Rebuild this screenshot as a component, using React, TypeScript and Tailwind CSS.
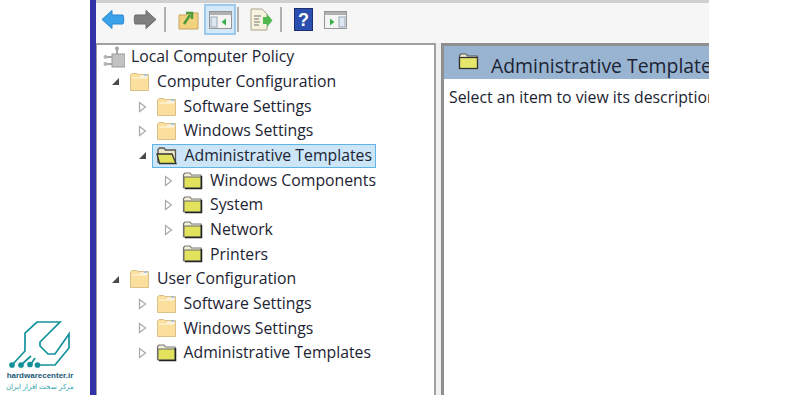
import type { ReactNode } from 'react';

type FolderKind = 'plain' | 'policy' | 'open';
type Arrow = 'open' | 'closed' | 'none';

type TreeRow = {
  label: string;
  depth: number;
  arrow: Arrow;
  folder: FolderKind;
  selected?: boolean;
};

const rows: TreeRow[] = [
  { label: 'Computer Configuration', depth: 0, arrow: 'open', folder: 'plain' },
  { label: 'Software Settings', depth: 1, arrow: 'closed', folder: 'plain' },
  { label: 'Windows Settings', depth: 1, arrow: 'closed', folder: 'plain' },
  { label: 'Administrative Templates', depth: 1, arrow: 'open', folder: 'open', selected: true },
  { label: 'Windows Components', depth: 2, arrow: 'closed', folder: 'policy' },
  { label: 'System', depth: 2, arrow: 'closed', folder: 'policy' },
  { label: 'Network', depth: 2, arrow: 'closed', folder: 'policy' },
  { label: 'Printers', depth: 2, arrow: 'none', folder: 'policy' },
  { label: 'User Configuration', depth: 0, arrow: 'open', folder: 'plain' },
  { label: 'Software Settings', depth: 1, arrow: 'closed', folder: 'plain' },
  { label: 'Windows Settings', depth: 1, arrow: 'closed', folder: 'plain' },
  { label: 'Administrative Templates', depth: 1, arrow: 'closed', folder: 'policy' },
];

function Folder({ kind }: { kind: FolderKind }) {
  if (kind === 'plain') {
    return (
      <svg width="21" height="20" viewBox="0 0 21 20" className="shrink-0">
        <path d="M1.5 5V18.5H19.5V2.5H9L8 1.5H3L1.5 3Z" fill="#fbdf9d" stroke="#dcc08a" />
        <path d="M3 6H18" stroke="#fff2cf" strokeWidth="1.5" />
        <path d="M11 3.5H18.5V5.5H11Z" fill="#f5f5ee" />
        <path d="M15 3H18.5" stroke="#9fbcd6" strokeWidth="1.5" />
      </svg>
    );
  }
  if (kind === 'open') {
    return (
      <svg width="22" height="20" viewBox="0 0 22 20" className="shrink-0">
        <path d="M2 16V3.5L3.5 2H8L9.5 4H19.5V16Z" fill="#ece6c4" stroke="#555" strokeWidth="1.3" />
        <path d="M1 8H16L20 17.5H3.5Z" fill="#e2e25c" stroke="#333" strokeWidth="1.3" />
      </svg>
    );
  }
  return (
    <svg width="21" height="20" viewBox="0 0 21 20" className="shrink-0">
      <path d="M1.5 16.5V3.5L3 2H8L9.5 4H19V16.5Z" fill="#f4f0d8" stroke="#777" strokeWidth="1.2" />
      <rect x="2" y="6" width="17" height="11" fill="#e2e25c" stroke="#666" strokeWidth="1" />
      <path d="M19.5 5V17.5H3" fill="none" stroke="#222" strokeWidth="1.5" />
    </svg>
  );
}

function Expander({ arrow }: { arrow: Arrow }) {
  if (arrow === 'none') return <span className="w-[9px]" />;
  if (arrow === 'open') {
    return (
      <svg width="9" height="9" viewBox="0 0 9 9">
        <path d="M8 1V8H1Z" fill="#4a4a4a" />
      </svg>
    );
  }
  return (
    <svg width="9" height="12" viewBox="0 0 9 12">
      <path d="M1.5 1.5L7.5 6L1.5 10.5Z" fill="#fff" stroke="#a8a8a8" strokeWidth="1.2" />
    </svg>
  );
}

function ToolButton({ children, active }: { children: ReactNode; active?: boolean }) {
  return (
    <div
      className={`flex h-[31px] w-[32px] items-center justify-center ${
        active ? 'border-2 border-[#9cc9ee] bg-[#d3e8f9]' : ''
      }`}
    >
      {children}
    </div>
  );
}

function ToolSep({ className }: { className: string }) {
  return <div className={`h-[25px] w-[2px] bg-[#b0b0b0] ${className}`} />;
}

function PaneIcon({ side }: { side: 'left' | 'right' }) {
  return (
    <svg width="23" height="18" viewBox="0 0 23 18" className="shrink-0">
      <rect x="0.5" y="0.5" width="22" height="17" fill="#f4f4f4" stroke="#959595" />
      <rect x="1" y="1" width="21" height="3" fill="#b0b0b0" />
      <rect x={side === 'left' ? 2 : 15} y="6" width="6" height="10" fill="#dfe8f2" stroke="#9aa7b5" />
      <path d={side === 'left' ? 'M17 7.5V14.5L12.5 11Z' : 'M6 7.5V14.5L10.5 11Z'} fill="#38b24a" />
    </svg>
  );
}

function Logo() {
  return (
    <svg width="64" height="50" viewBox="8 318 64 50" fill="none" stroke="#13929b" strokeWidth="1.7">
      <path d="M12 365L25 351V333L37 322H60L40 342V346L48 354H55L69 334V348L55 365H37" />
      <path d="M21 365L31 356" />
      <path d="M31 364L35 358" />
      <circle cx="12" cy="365" r="2" fill="#0e8d98" />
      <circle cx="21" cy="365" r="2" fill="#0e8d98" />
      <circle cx="30" cy="364.5" r="2" fill="#0e8d98" />
      <circle cx="37.5" cy="365" r="2" fill="#0e8d98" />
    </svg>
  );
}

export default function App() {
  return (
    <div className="flex h-[400px] w-[800px] items-start overflow-hidden bg-white font-['Open_Sans',sans-serif] text-[#1c2433]">
      {/* logo strip */}
      <div className="flex h-[400px] w-[90px] flex-col items-center justify-end pb-[8px] pr-[10px]">
        <Logo />
        <div className="mt-[2px] whitespace-nowrap font-['Liberation_Sans',sans-serif] text-[8px] font-bold leading-[11px] text-[#1a5a78]">
          hardwarecenter.ir
        </div>
        <div className="whitespace-nowrap font-['Noto_Sans',sans-serif] text-[7px] leading-[11px] text-[#2aa3a8]" dir="rtl">
          مرکز سخت افزار ایران
        </div>
      </div>
      <div className="h-[395px] w-[6px] bg-[#3232a8]" />

      <div className="flex h-[395px] w-[613px] flex-col bg-[#f0f0f0]">
        {/* toolbar */}
        <div className="flex h-[43px] items-start border-t-[3px] border-[#cfcfcf] bg-[#f6f6f6] pl-[1px] pt-[1px]">
          <ToolButton>
            <svg width="24" height="21" viewBox="0 0 24 21">
              <path d="M1 10.5L11 1.5V6H22C23 9 23 12 22 15H11V19.5Z" fill="#3aa2e8" stroke="#2a86d0" strokeLinejoin="round" />
            </svg>
          </ToolButton>
          <ToolButton>
            <svg width="24" height="21" viewBox="0 0 24 21">
              <path d="M23 10.5L13 1.5V6H2C1 9 1 12 2 15H13V19.5Z" fill="#7f7f7f" stroke="#6c6c6c" strokeLinejoin="round" />
            </svg>
          </ToolButton>
          <ToolSep className="ml-[3px] mr-[6px] mt-[3px]" />
          <ToolButton>
            <svg width="21" height="20" viewBox="0 0 21 20">
              <path d="M1 5H8L9 3H20V19H1Z" fill="#f2d27e" stroke="#c8a560" />
              <path d="M6 14L12 5M8 3H14V9" fill="none" stroke="#4c9a3a" strokeWidth="2.5" />
            </svg>
          </ToolButton>
          <ToolButton active>
            <PaneIcon side="left" />
          </ToolButton>
          <ToolSep className="ml-[1px] mr-[6px] mt-[3px]" />
          <ToolButton>
            <svg width="24" height="23" viewBox="0 0 24 23">
              <path d="M2 1H13L18 6V22H2Z" fill="#f7f2de" stroke="#a8a38f" />
              <path d="M5 8H12M5 11H10M5 14H11M5 17H10" stroke="#777" />
              <path d="M14 9H18V6L23.5 12.5L18 19V16H14Z" fill="#4fb84f" />
            </svg>
          </ToolButton>
          <ToolSep className="ml-[3px] mr-[5px] mt-[3px]" />
          <ToolButton>
            <svg width="19" height="23" viewBox="0 0 19 23">
              <rect x="0.5" y="0.5" width="18" height="22" fill="#2a4fae" stroke="#1b2f70" />
              <text x="9.5" y="18" textAnchor="middle" fontSize="18" fontWeight="700" fill="#fff" fontFamily="Liberation Sans">
                ?
              </text>
            </svg>
          </ToolButton>
          <ToolButton>
            <PaneIcon side="right" />
          </ToolButton>
        </div>

        {/* panes */}
        <div className="flex min-h-0 flex-1 gap-[5px]">
          <div className="w-[340px] border-l border-r-2 border-t-2 border-[#a0a0a0] bg-white text-[15.8px]">
            <div className="flex h-[24.65px] items-center pl-[6px]">
              <svg width="22" height="22" viewBox="0 0 22 22" className="shrink-0">
                <rect x="9" y="8" width="13" height="13" fill="#c2c2c2" stroke="#9a9a9a" />
                <circle cx="14" cy="2.5" r="2" fill="#a5a5a5" />
                <path d="M14 4V8M3 11H9M3 18H9" stroke="#a5a5a5" strokeWidth="2" />
                <circle cx="2.5" cy="11" r="2" fill="#b5b5b5" />
                <circle cx="2.5" cy="18" r="2" fill="#b5b5b5" />
              </svg>
              <span className="ml-[6px] whitespace-nowrap">Local Computer Policy</span>
            </div>
            {rows.map((row, idx) => (
              <div key={idx} className="flex h-[24.65px] items-center" style={{ paddingLeft: 14 + row.depth * 26.5 }}>
                <span className="flex w-[18px] justify-start">
                  <Expander arrow={row.arrow} />
                </span>
                <div
                  className={`-ml-[4px] flex h-[24px] items-center border pl-[3px] pr-[3px] ${
                    row.selected ? 'border-[#5fb4e8] bg-[#cde6f7]' : 'border-transparent'
                  }`}
                >
                  <Folder kind={row.folder} />
                  <span className="ml-[7px] whitespace-nowrap">{row.label}</span>
                </div>
              </div>
            ))}
          </div>

          <div className="min-w-0 flex-1 overflow-hidden border-l-[3px] border-t-[3px] border-[#8f8f8f] bg-white">
            <div className="flex h-[33px] items-center whitespace-nowrap bg-[#99b4d1] pl-[14px] text-[19.4px]">
              <svg width="22" height="18" viewBox="0 0 22 18" className="mb-[2px] shrink-0">
                <path d="M1.5 15V2.5L3 1H8L9.5 3H19V15Z" fill="#f4f0d8" stroke="#555" strokeWidth="1.2" />
                <rect x="1.5" y="4.5" width="18" height="11" fill="#e6e66c" stroke="#333" strokeWidth="1.3" />
              </svg>
              <span className="ml-[11px] pt-[6px]">Administrative Templates</span>
            </div>
            <div className="whitespace-nowrap pl-[5px] pt-[7px] text-[15.8px] leading-[22px]">
              Select an item to view its description.
            </div>
          </div>
        </div>
      </div>
    </div>
  );
}
